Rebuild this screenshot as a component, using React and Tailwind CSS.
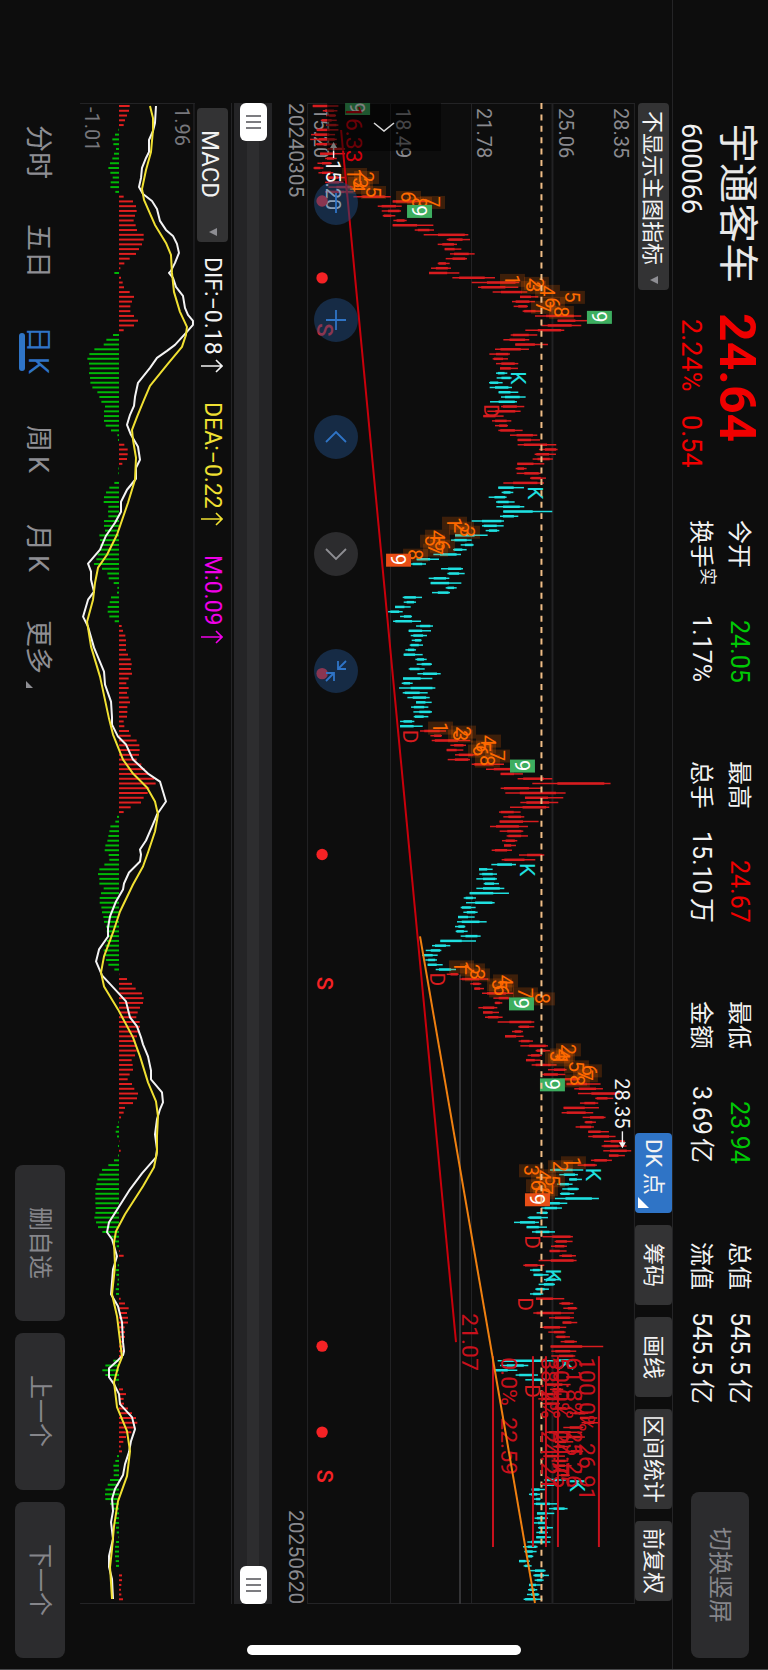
import React, { useState } from 'react'
import clsx from 'clsx'

const RED = '#d81c1f'
const CYAN = '#1fe0e0'
const GREEN = '#00b806'

// One entry per trading day, first day at the top. "low-high" in thirds of a pixel.
const RUNS = [
  { color: RED, bars: '38-115 68-112 78-108 62-110 78-115 50-115 33-105 30-110 45-110 82-135 60-135 75-110 52-95 40-70 55-100 80-138 75-130 85-160 75-160 160-272 278-390 233-305 245-303 248-286 280-320 278-400 344-402 371-505 440-510 413-471 434-484 450-524 437-501 413-449 393-453 387-478 457-585 515-658 534-655 578-682 660-715 636-705 641-684 668-725 705-844 773-862 724-844 676-793 632-712 610-688 646-744 585-687 568-630 578-624 588-655 600-654' },
  { color: CYAN, bars: '588-622 590-635 567-608 569-636 596-655 603-677 570-651' },
  { color: RED, bars: '603-673 562-662 550-611 576-634 585-624 595-668 630-712 653-720 653-769 717-773 704-768 698-759 652-733 647-680 650-722 690-738 610-732' },
  { color: CYAN, bars: '595-672 605-640 566-620 588-644 589-673 610-757 600-655 515-612 546-611 557-598 465-563 453-515 482-521 459-500 400-483 350-417 330-378 423-489 442-494 386-448 392-484 437-470 396-450 308-366 311-348 285-332 264-308 300-336 279-363 348-399 326-393 332-381 335-365 329-369 316-348 311-368 346-380 350-396 326-374 352-422 309-397 305-338 297-406 308-383 322-389 348-395 333-385 340-396 341-385 300-343 300-368' },
  { color: RED, bars: '360-438 391-426 395-511 451-498 440-490 465-535 443-510 515-612 558-655 602-669 653-757 697-932 602-727 616-797 675-790 661-775 630-748 597-662 610-673 599-716 570-684 599-670 620-684 606-652 612-648 575-636 657-733 605-706' },
  { color: CYAN, bars: '574-648 537-578 538-591 529-591 551-597 529-613 509-627 491-528 498-584 482-527 490-533 474-524 471-560 465-496 467-503 482-542 421-528 396-451 377-424 366-413 376-411 383-428 407-468' },
  { color: RED, bars: '440-476 479-565 511-544 523-552 546-640 580-630 584-607 535-592 549-597 555-608 593-703 655-703 636-669 615-671 656-699 661-744 707-750 683-726 678-722 695-770 744-800 726-796 780-840 800-902 823-909 834-960 886-940 840-895 791-897 785-880 848-917 854-888 827-882 865-927 865-947 912-975 905-980 910-994 927-975 873-936 833-891' },
  { color: CYAN, bars: '750-850 778-834 808-846 772-818 787-837 780-823 765-897 746-802 724-786 710-744 683-744 642-717 680-741 696-765' },
  { color: RED, bars: '728-819 764-818 753-801 749-800 778-828 716-830 670-733' },
  { color: CYAN, bars: '690-725 701-746 732-778 716-765 706-747 690-730' },
  { color: RED, bars: '708-793 778-820 790-832 700-822 747-822 788-832 720-799 745-797 767-810 782-831 752-910 754-829 754-826' },
  { color: CYAN, bars: '593-790 600-685 580-652 647-714 676-745' },
  { color: RED, bars: '735-812 750-790 720-785 715-800 720-780 760-815 810-865 840-892 845-895 790-850 738-847 780-855 765-820 760-805 795-850 730-795 755-805 765-815 760-805 770-810' },
  { color: CYAN, bars: '732-798 722-770 695-735 687-720 702-722 702-772 747-803 711-763 704-744 702-740 714-759 709-744 709-753 682-751 669-713 673-710 680-700 657-690 671-695 690-737 700-747 704-731 687-722 684-712 681-718 671-727' },
]

const CANDLES = RUNS.flatMap(({ color, bars }) =>
  bars.split(' ').map((bar) => {
    const [low, high] = bar.split('-').map((n) => Number(n) / 3)
    return { color, low, high }
  })
)

const FIRST_DAY = 106
const STEP = 4.774
const dayY = (i) => FIRST_DAY + i * STEP

// Histogram tips, same unit; the zero line is at 357
const ZERO = 357
const MACD = [
  389, 387, 381, 375, 371, 355, 345, 337, 340, 348, 342, 337, 330, 325, 331, 338, 332, 331, 346,
  371, 399, 408, 410, 405, 401, 407, 411, 431, 431, 426, 417, 408, 389, 373, 361, 343,
  363, 368, 372, 389, 402, 396, 391, 391, 402, 414, 402, 371,
  339, 319, 311, 283, 268, 262, 267, 269, 267, 270, 271, 277, 292, 298, 304, 315, 312, 312, 312, 317, 333, 352, 354,
  373, 383, 383, 381, 367, 355, 355, 357,
  343, 328, 318, 312, 311, 325, 324, 325, 312, 312, 315, 298, 300, 301, 301, 293, 289, 282, 306, 322, 326, 341, 352, 351, 333, 329, 323, 323, 328, 344,
  365, 369, 376, 378, 378, 378, 384, 392, 395, 393, 396, 386, 379, 386, 381, 386, 390, 382, 382, 381,
  371, 373, 387, 392, 410, 418, 419, 417, 410, 424, 434, 445, 462, 467, 448, 443, 431, 423, 392, 371,
  351, 346, 331, 328, 325, 322, 316, 314, 326, 328, 313, 298, 294, 298, 298, 311, 303, 299, 299, 304, 306, 310, 312, 318, 320, 321, 321, 316, 311, 313, 318, 325, 343,
  358, 381, 396, 407, 426, 431, 429, 420, 413, 409, 419, 420, 419, 411,
  406, 410, 410, 405, 395, 398, 399, 389, 383, 396, 403, 414, 411, 399, 375, 371, 363,
  355, 350, 347, 351, 358, 354, 362, 354,
  342, 325, 306, 298, 292, 289, 286, 286, 286, 286, 287, 286, 283, 288, 294, 307, 333, 341, 350,
  359, 371, 357, 353, 347, 349, 353, 351, 347, 348,
  362, 375, 386, 381, 384, 384, 374, 375, 375, 370, 370, 371, 368,
  340, 316, 307, 316, 342, 356,
  369, 378, 371, 372, 384, 396, 408, 412, 406, 394, 378, 370, 362, 366,
  351, 346, 340, 341, 341, 330, 323, 316, 315, 316, 330, 338, 345, 346, 345, 348, 350, 355, 348, 345, 345, 345, 347, 348,
  357, 366, 366, 364, 363, 364, 369,
]

const DIF =
  '156,106 155,123 153,131 149,140 149,152 146,158 142,168 141,178 139,187 143,194 152,201 157,209 160,221 166,230 173,236 177,244 179,253 175,263 171,271 169,273 173,278 176,287 183,296 185,308 188,315 193,321 193,325 186,333 175,345 167,351 157,358 150,368 138,383 135,397 134,406 130,415 127,425 131,435 138,447 140,460 136,468 136,479 127,490 121,502 121,512 115,523 106,536 100,550 88,564 91,572 91,580 94,592 88,600 83,617 88,627 94,648 104,672 105,685 111,702 112,718 112,725 118,737 126,745 133,760 148,774 160,782 163,792 166,802 157,815 152,827 146,841 140,850 141,855 140,862 129,873 124,884 123,890 116,902 110,917 108,928 108,937 99,950 96,962 102,976 115,990 126,1002 130,1018 137,1027 141,1038 143,1045 148,1057 151,1071 151,1080 162,1093 163,1103 160,1110 157,1120 155,1135 157,1150 156,1158 142,1174 130,1190 118,1209 109,1223 107,1233 112,1240 117,1257 113,1270 111,1295 118,1307 122,1323 123,1343 124,1352 123,1356 118,1361 109,1369 109,1378 114,1385 119,1395 120,1405 132,1418 135,1430 131,1442 129,1453 125,1465 123,1476 115,1490 112,1500 113,1512 111,1523 113,1540 109,1557 109,1568 112,1580 113,1600'

const DEA =
  '150,106 153,118 153,130 151,152 146,170 142,189 144,200 155,225 166,243 171,255 172,273 174,292 180,312 187,327 186,335 182,347 167,365 150,386 144,400 137,417 132,430 133,440 136,458 135,480 128,503 117,535 107,555 98,568 95,583 93,600 87,622 91,647 100,677 109,719 113,735 123,760 133,774 147,788 155,802 158,815 155,832 148,853 143,867 133,885 120,912 113,933 104,957 101,973 104,987 118,1010 133,1038 140,1057 148,1083 156,1102 158,1117 157,1137 157,1153 154,1168 143,1187 125,1215 116,1232 114,1243 115,1267 112,1295 117,1317 122,1358 118,1368 114,1383 117,1408 127,1432 130,1452 127,1477 118,1502 114,1527 112,1550 110,1568 112,1600'

// Nine-turn counts: label, x, y
const COUNTS = [
  ['1', 354, 174], ['2', 366, 177], ['3', 360, 183], ['4', 357, 187], ['5', 373, 192], ['6', 408, 197], ['8', 419, 203], ['7', 432, 202],
  ['1', 512, 280], ['2', 536, 283], ['3', 533, 287], ['4', 547, 291], ['5', 572, 297], ['6', 552, 303], ['7', 543, 307], ['8', 561, 312],
  ['1', 454, 523], ['2', 461, 528], ['3', 467, 532], ['4', 437, 536], ['5', 432, 541], ['6', 442, 546], ['7', 435, 550], ['8', 415, 555],
  ['1', 440, 728], ['2', 463, 732], ['3', 460, 736], ['4', 488, 741], ['5', 483, 747], ['6', 480, 751], ['7', 497, 756], ['8', 487, 761],
  ['1', 461, 967], ['2', 472, 970], ['3', 477, 975], ['4', 505, 981], ['5', 499, 985], ['6', 501, 991], ['7', 525, 994], ['8', 542, 999],
  ['2', 568, 1050], ['3', 557, 1057], ['1', 560, 1060], ['4', 562, 1055], ['5', 576, 1067], ['6', 589, 1071], ['7', 585, 1076], ['8', 577, 1081],
  ['1', 573, 1163], ['2', 560, 1167], ['3', 531, 1171], ['4', 543, 1176], ['5', 552, 1181], ['6', 538, 1186], ['7', 545, 1190], ['8', 542, 1193],
]

const NINES = [
  [357, 108, '#3dae60'], [419, 211, '#3dae60'], [599, 317, '#3dae60'], [398, 560, '#e84e16'], [522, 766, '#3dae60'],
  [521, 1004, '#3dae60'], [552, 1085, '#3dae60'], [537, 1200, '#e84e16'],
]

const SIGNALS = [
  ['K', 519, 378], ['D', 492, 411], ['K', 536, 493], ['D', 411, 737], ['K', 528, 870], ['D', 438, 980],
  ['K', 594, 1175], ['D', 533, 1243], ['K', 554, 1276], ['D', 526, 1305], ['K', 566, 1365], ['D', 533, 1392], ['K', 578, 1486],
]

const FIB = [
  { x: 493, label: '0.0%\u00a0\u00a022.59', labelX: 509 },
  { x: 533, label: '38.2%\u00a0\u00a024.24', labelX: 549 },
  { x: 546, label: '50.0%\u00a0\u00a024.75', labelX: 561 },
  { x: 558, label: '61.8%\u00a0\u00a025.26', labelX: 574 },
  { x: 599, label: '100.0%\u00a0\u00a026.91', labelX: 587 },
]

const AXIS = [['15.20', 321], ['18.49', 403], ['21.78', 484], ['25.06', 566], ['28.35', 621]]

const STATS = [
  { label: '今开', value: '24.05', tone: 'text-[#00c805]' },
  { label: '最高', value: '24.67', tone: 'text-[#f00000]' },
  { label: '最低', value: '23.94', tone: 'text-[#00c805]' },
  { label: '总值', value: '545.5', unit: '亿', tone: 'text-[#f2f2f2]' },
  { label: '换手', mark: '实', value: '1.17%', tone: 'text-[#f2f2f2]' },
  { label: '总手', value: '15.10', unit: '万', tone: 'text-[#f2f2f2]' },
  { label: '金额', value: '3.69', unit: '亿', tone: 'text-[#f2f2f2]' },
  { label: '流值', value: '545.5', unit: '亿', tone: 'text-[#f2f2f2]' },
]

// Text turned a quarter clockwise, centred on x across its height
const Turned = ({ x, y, size = 20, anchor = 'start', children, ...rest }) => (
  <text
    transform={`translate(${x} ${y}) rotate(90)`}
    y={Math.round(size * 0.36)}
    fontSize={size}
    textAnchor={anchor}
    {...rest}
  >
    {children}
  </text>
)

const PriceChart = () => (
  <svg viewBox="307 103 328 1502" className="block h-full w-full [writing-mode:horizontal-tb]" role="img" aria-label="日K">
    {/* Grid */}
    <path d="M307.5 103V1605M390.5 103V1605M471.5 103V1605M634.5 103V1605M307 103.5H635M307 1604.5H635" stroke="#242426" fill="none" />
    <path d="M552.5 103V1605" stroke="#222224" strokeWidth="2" />
    <path d="M460 975V1605" stroke="#353537" strokeWidth="2" />

    {AXIS.map(([price, x]) => (
      <Turned key={price} x={x} y={108} fill="#8a8a8f">{price}</Turned>
    ))}

    {/* Candles */}
    {CANDLES.map(({ color, low, high }, i) => {
      const y = dayY(i)
      const size = high - low
      const from = low + size * ((i * 7) % 5) * 0.08
      return (
        <g key={i} stroke={color}>
          <line x1={300 + low} x2={300 + high} y1={y} y2={y} strokeWidth="1.5" />
          <line x1={300 + from} x2={300 + from + size * 0.6} y1={y} y2={y} strokeWidth="2.5" />
        </g>
      )
    })}

    {COUNTS.map(([n, x, y], i) => (
      <g key={i}>
        <rect x={x - 12} y={y - 6} width="25" height="13" fill="#ff6a00" fillOpacity="0.2" />
        <Turned x={x} y={y} anchor="middle" fill="#ff6a00">{n}</Turned>
      </g>
    ))}
    {NINES.map(([x, y, fill], i) => (
      <g key={i}>
        <rect x={x - 12} y={y - 6} width="25" height="13" fill={fill} />
        <Turned x={x} y={y} anchor="middle" fill="#fff">9</Turned>
      </g>
    ))}
    {SIGNALS.map(([mark, x, y], i) => (
      <Turned key={i} x={x} y={y} size={21} anchor="middle" fill={mark === 'K' ? CYAN : RED}>{mark}</Turned>
    ))}

    {/* Drawn lines */}
    <path d="M341 130L456 1343" stroke="#c8000b" strokeWidth="2" />
    <path d="M541.5 103V1604" stroke="#f0bd86" strokeWidth="2" strokeDasharray="6 5.4" />
    {FIB.map(({ x, label, labelX }) => (
      <g key={x}>
        <path d={`M${x} 1357V1548`} stroke="#c8101c" strokeWidth="2" />
        <Turned x={labelX} y={1358} size={23} fill="#c8101c">{label}</Turned>
      </g>
    ))}
    <path d="M420 937L535 1604" stroke="#f08010" strokeWidth="2" />
    <Turned x={354} y={105} size={23} fill="#d2000c">16.33</Turned>
    <Turned x={470} y={1314} size={23} fill="#c8101c">21.07</Turned>

    {/* High and low of the period */}
    <Turned x={333} y={160} fill="#f2f2f2">15.20</Turned>
    <path d="M333.5 158V147" stroke="#f2f2f2" strokeWidth="1.4" />
    <path d="M330 148l3.5-6 3.5 6z" fill="#f2f2f2" />
    <Turned x={622} y={1079} fill="#f2f2f2">28.35</Turned>
    <path d="M622.5 1132V1144" stroke="#f2f2f2" strokeWidth="1.4" />
    <path d="M619 1143l3.5 6 3.5-6z" fill="#f2f2f2" />

    {/* Event marks */}
    {[201, 278, 674, 855, 1347, 1433].map((y) => (
      <circle key={y} cx="322" cy={y} r="5.7" fill="#f52225" />
    ))}
    {[330, 984, 1477].map((y) => (
      <Turned key={y} x={325} y={y} size={22} anchor="middle" fill="#f52225" fontWeight="500">S</Turned>
    ))}
  </svg>
)

const MacdChart = () => (
  <svg viewBox="80 103 115 1502" className="block h-full w-full [writing-mode:horizontal-tb]" role="img" aria-label="MACD">
    <path d="M194 103V1605" stroke="#1c1c1e" strokeWidth="2" />
    <path d="M80 103.5H195M80 1604.5H195" stroke="#242426" />
    <Turned x={182} y={107} fill="#77777c">1.96</Turned>
    <Turned x={92} y={107} fill="#77777c">-1.01</Turned>
    {MACD.map((tip, i) => (
      <line
        key={i}
        x1={ZERO / 3}
        x2={tip / 3}
        y1={dayY(i)}
        y2={dayY(i)}
        stroke={tip > ZERO ? '#e01f1f' : GREEN}
        strokeWidth="2"
      />
    ))}
    <polyline points={DIF} fill="none" stroke="#f4f4f4" strokeWidth="2" strokeLinejoin="round" />
    <polyline points={DEA} fill="none" stroke="#f0e032" strokeWidth="2" strokeLinejoin="round" />
  </svg>
)

const Caret = ({ className }) => (
  <svg viewBox="0 0 8 8" className={clsx('pointer-events-none size-2', className)} aria-hidden="true">
    <path d="M8 0v8L0 4z" fill="#8e8e93" />
  </svg>
)

const Corner = ({ className }) => (
  <svg viewBox="0 0 10 10" className={className} aria-hidden="true">
    <path d="M0 0v10h10z" fill="currentColor" />
  </svg>
)

const Arrow = () => (
  <svg viewBox="0 0 22 14" className="h-[14px] w-[22px]" fill="none" stroke="currentColor" strokeWidth="1.6" aria-hidden="true">
    <path d="M0 7h21M15 1l6 6-6 6" />
  </svg>
)

const Stat = ({ label, mark, value, unit, tone }) => (
  <div className="flex justify-between leading-[30px]">
    <dt className="text-[24px] text-[#f2f2f2]">
      {label}
      {mark && <span className="align-[9px] text-[17px] leading-none">{mark}</span>}
    </dt>
    <dd className={clsx('flex gap-1 text-[25px]', tone)}>
      {value}
      {unit && <span>{unit}</span>}
    </dd>
  </div>
)

const Header = ({ turned, onTurn }) => (
  <header className="flex h-full w-24 border-l border-[#242426] pt-[123px] pb-[11px]">
    <div className="flex flex-col gap-[7px] pr-2">
      <h1 className="text-[40px] leading-[46px] text-[#e8e8e8]">宇通客车</h1>
      <p className="text-[27px] leading-8 text-[#f2f2f2]">600066</p>
    </div>
    <div className="mt-[30px] flex h-[207px] flex-col gap-[7px] pr-2 text-[#f00000]">
      <p className="text-[50px] leading-[46px] font-bold">24.64</p>
      <p className="flex gap-6 pt-[6px] text-[27px] leading-8">
        <span>2.24%</span>
        <span>0.54</span>
      </p>
    </div>
    <dl className="grid flex-1 grid-cols-4 content-start gap-x-[78px] gap-y-2 pr-[14px]">
      {STATS.map((stat) => (
        <Stat key={stat.label} {...stat} />
      ))}
    </dl>
    <button
      type="button"
      aria-pressed={turned}
      onClick={onTurn}
      className="mt-[88px] mr-[19px] h-[166px] w-[58px] rounded-lg bg-[#2c2c2e] text-[24px] text-[#86868b]"
    >
      切换竖屏
    </button>
  </header>
)

const TOOLS = ['筹码', '画线', '区间统计', '前复权']

const Toolbar = () => {
  const [dk, setDk] = useState(true)

  return (
    <div className="flex h-full w-[37px] items-center justify-between pt-[103px] pb-[68px]">
      <div className="relative flex h-[187px] w-[31px] items-center rounded bg-[#333334]">
        <select aria-label="主图指标" className="h-full w-full appearance-none bg-transparent pt-2 text-[22px] text-[#f2f2f2]">
          <option>不显示主图指标</option>
        </select>
        <Caret className="absolute bottom-[6px] left-[12px]" />
      </div>
      <div className="flex w-full gap-3 text-[22px] text-[#f2f2f2]">
        <button
          type="button"
          aria-pressed={dk}
          onClick={() => setDk(!dk)}
          className="relative h-20 w-full rounded bg-[#2f74c6] pb-3"
        >
          DK 点
          <Corner className="absolute bottom-[5px] left-[3px] size-[11px] text-white" />
        </button>
        {TOOLS.map((tool) => (
          <button key={tool} type="button" className="min-h-20 w-full rounded bg-[#333334] px-[6px]">
            {tool}
          </button>
        ))}
      </div>
    </div>
  )
}

const CONTROLS = [
  { name: '缩小', icon: 'M11 1v20' },
  { name: '放大', icon: 'M11 1v20M1 11h20' },
  { name: '左移', icon: 'M1 16L11 6l10 10' },
  { name: '右移', icon: 'M1 6l10 10L21 6', off: true },
  { name: '收起', icon: 'M21 1l-8 8M13 1v8h8M1 21l8-8M1 13h8v8' },
]

const ChartControls = () => (
  <div className="absolute top-[78px] left-[7px] flex gap-[73px]">
    {CONTROLS.map(({ name, icon, off }) => (
      <button
        key={name}
        type="button"
        aria-label={name}
        disabled={off}
        className={clsx(
          'flex size-11 items-center justify-center rounded-full',
          off ? 'bg-[#2c2c2e] text-[#8e8e93]' : 'bg-[#1f4a7e]/50 text-[#2f74c6]'
        )}
      >
        <svg viewBox="0 0 22 22" className="size-[22px]" fill="none" stroke="currentColor" strokeWidth="1.8" aria-hidden="true">
          <path d={icon} />
        </svg>
      </button>
    ))}
  </div>
)

const THUMB =
  '[&::-webkit-slider-thumb]:h-[38px] [&::-webkit-slider-thumb]:w-[27px] [&::-webkit-slider-thumb]:appearance-none [&::-webkit-slider-thumb]:rounded-md [&::-webkit-slider-thumb]:bg-white [&::-webkit-slider-thumb]:bg-[repeating-linear-gradient(#7c7c80_0_2px,transparent_2px_6px)] [&::-webkit-slider-thumb]:bg-[length:15px_14px] [&::-webkit-slider-thumb]:bg-center [&::-webkit-slider-thumb]:bg-no-repeat'

const RangeStrip = () => (
  <div className="flex w-[38px] flex-none items-center bg-[#242426]">
    <div className="flex h-full w-[38px] items-center bg-[linear-gradient(90deg,transparent_13px,#2d2d2f_13px_25px,transparent_25px)]">
      <input type="range" aria-label="开始日期" defaultValue="0" className={clsx('h-1/2 w-[27px] appearance-none bg-transparent', THUMB)} />
      <input type="range" aria-label="结束日期" defaultValue="100" className={clsx('h-1/2 w-[27px] appearance-none bg-transparent', THUMB)} />
    </div>
  </div>
)

const Indicator = () => (
  <div className="mr-[2px] flex w-[37px] flex-none items-center gap-[29px] border-r border-[#242426] pr-[2px] text-[23px]">
    <div className="relative mt-[5px] -mb-[14px] flex h-[134px] w-[31px] items-center rounded bg-[#333334]">
      <select aria-label="副图指标" className="h-full w-full appearance-none bg-transparent pt-[22px] text-[24px] text-[#f2f2f2]">
        <option>MACD</option>
      </select>
      <Caret className="absolute bottom-[6px] left-[12px]" />
    </div>
    <span className="flex items-center gap-1 text-[#f2f2f2]">DIF:−0.18 <Arrow /></span>
    <span className="flex items-center gap-1 text-[#f0e032]">DEA:−0.22 <Arrow /></span>
    <span className="flex items-center gap-1 text-[#f000e8]">M:0.09 <Arrow /></span>
  </div>
)

const PERIODS = ['分时', '五日', '日K', '周K', '月K', '更多']

const Footer = ({ period, onPeriod }) => (
  <footer className="flex h-full w-20 items-center justify-between pt-[102px] pb-[11px]">
    <nav className="grid h-[594px] w-full grid-cols-6">
      {PERIODS.map((name) => {
        const active = name === period
        return (
          <button
            key={name}
            type="button"
            aria-pressed={active}
            onClick={() => onPeriod(name)}
            className={clsx(
              'relative flex items-center justify-center gap-1 pr-1 text-[27px]',
              active ? 'text-[#2f74c6]' : 'text-[#8e8e93]'
            )}
          >
            {name.split(/(?=K)/).map((part) => (
              <span key={part}>{part}</span>
            ))}
            {active && <i className="absolute top-[33px] bottom-[28px] left-[19px] w-[6px] rounded-full bg-[#2f74c6]" />}
            {name === '更多' && <Corner className="absolute bottom-[8px] left-[26px] size-[7px]" />}
          </button>
        )
      })}
    </nav>
    <div className="flex h-[493px] w-[50px] gap-3 text-[24px] text-[#86868b]">
      <button type="button" className="flex-1 rounded-lg bg-[#2c2c2e]">删自选</button>
      <button type="button" className="flex-1 rounded-lg bg-[#2c2c2e]">上一个</button>
      <button type="button" className="flex-1 rounded-lg bg-[#2c2c2e]">下一个</button>
    </div>
  </footer>
)

const App = () => {
  const [period, setPeriod] = useState('日K')
  const [turned, setTurned] = useState(true)

  return (
    <main className="relative flex h-screen w-full flex-col overflow-hidden border-b border-[#48484a] bg-[#0d0d0d] font-['Roboto','Noto_Sans_CJK_SC',sans-serif] whitespace-nowrap [text-orientation:sideways] [writing-mode:vertical-rl]">
      <Header turned={turned} onTurn={() => setTurned(!turned)} />
      <Toolbar />

      <section className="flex min-w-0 flex-1 flex-col pt-[103px] pb-[65px]">
        <div className="relative min-w-0 flex-1">
          <PriceChart />
          <ChartControls />
          <button
            type="button"
            aria-label="展开"
            className="absolute top-0 left-5 flex h-12 w-[114px] items-center justify-center bg-black/50 text-[#d8d8d8]"
          >
            <svg viewBox="0 0 22 10" className="h-[10px] w-[22px]" fill="none" stroke="currentColor" strokeWidth="1.6" aria-hidden="true">
              <path d="M1 1l10 8L21 1" />
            </svg>
          </button>
        </div>
        <div className="flex w-[35px] justify-between text-[21px] leading-[22px] text-[#8a8a8f]">
          <time>20240305</time>
          <time>20250620</time>
        </div>
        <RangeStrip />
        <Indicator />
        <div className="w-[115px] flex-none">
          <MacdChart />
        </div>
      </section>

      <Footer period={period} onPeriod={setPeriod} />
      <div className="absolute bottom-[14px] left-1/2 h-[10px] w-[274px] -translate-x-1/2 rounded-full bg-white" />
    </main>
  )
}

export default App
